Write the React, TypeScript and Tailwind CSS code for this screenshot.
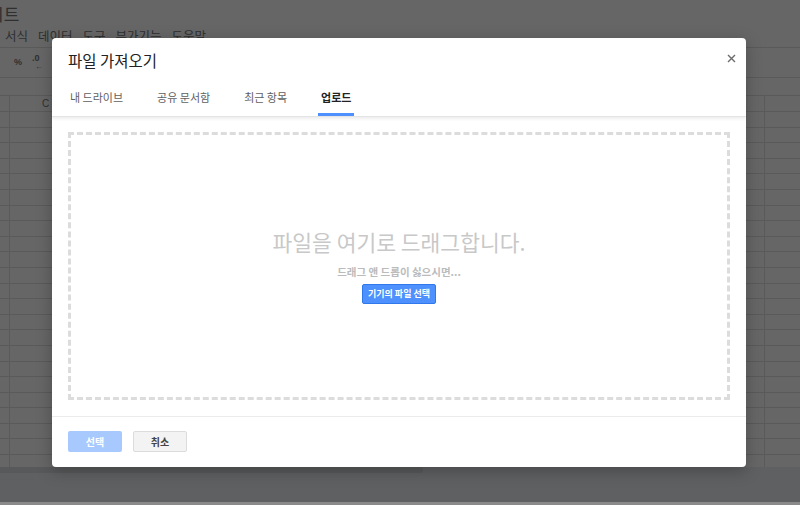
import React from 'react';

const KR = { fontFamily: '"Noto Sans CJK KR", "Liberation Sans", sans-serif' };

const tabs = ['내 드라이브', '공유 문서함', '최근 항목', '업로드'];

const GridRow: React.FC = () => (
    <div className="flex h-[15.6px] shrink-0 border-b border-[#5a5a5a]">
        <div className="w-[10px] border-r border-[#5a5a5a]"></div>
        <div className="flex-1"></div>
        <div className="w-[36px] border-l border-[#5a5a5a]"></div>
    </div>
);

const Sheet: React.FC = () => (
    <div className="flex h-full flex-col bg-[#666666] text-[#2f2f2f]" style={KR}>
        <div className="flex h-[26px] items-center overflow-hidden">
            <span className="-ml-[12px] text-[17px] leading-none">시트</span>
        </div>
        <div className="flex h-[22px] items-start gap-[10px] border-b border-[#5a5a5a] pl-[5px] text-[12.5px] leading-[20px]">
            <span>서식</span>
            <span>데이터</span>
            <span>도구</span>
            <span>부가기능</span>
            <span>도움말</span>
        </div>
        <div className="flex h-[30px] items-center gap-[10px] border-b border-[#5a5a5a] pl-[14px] text-[9px] font-bold" style={{ fontFamily: '"Liberation Sans", sans-serif' }}>
            <span>%</span>
            <span className="flex flex-col items-start gap-[1px] leading-[8px]">
                <span>.0</span>
                <span className="pl-[3px] text-[8px]">←</span>
            </span>
        </div>
        <div className="h-[18px] border-b border-[#5a5a5a]"></div>
        <div className="flex h-[16px] border-b border-[#5a5a5a]">
            <div className="w-[10px] border-r border-[#5a5a5a]"></div>
            <div className="flex-1 pl-[32px] text-[10px] leading-[15px]" style={{ fontFamily: '"Liberation Sans", sans-serif' }}>C</div>
            <div className="w-[36px] border-l border-[#5a5a5a]"></div>
        </div>
        <div className="flex h-[355px] flex-col overflow-hidden">
            {Array.from({ length: 23 }).map((_, i) => (
                <GridRow key={i} />
            ))}
        </div>
        <div className="flex h-[6px] bg-[#5f6062]">
            <div className="w-[423px] rounded-r-[3px] bg-[#58595a]"></div>
        </div>
        <div className="flex-1 bg-[#5f6062]"></div>
        <div className="h-[3px] bg-[#8a8a8a]"></div>
    </div>
);

const App: React.FC = () => {
    return (
        <div className="relative h-[505px] w-[800px] overflow-hidden">
            <Sheet />

            {/* Dialog */}
            <div className="absolute left-[52px] top-[38px] flex h-[429px] w-[694px] flex-col rounded-[4px] bg-white shadow-[0_4px_16px_rgba(0,0,0,0.25)]" style={KR}>
                <button className="absolute right-[10px] top-[16px] flex h-[9px] w-[9px] items-center justify-center">
                    <svg width="9" height="9" viewBox="0 0 9 9">
                        <path d="M1 1 L8 8 M8 1 L1 8" stroke="#6b6b6b" strokeWidth="1.4" />
                    </svg>
                </button>

                <div className="px-4 pt-[12px] pb-[10px] text-[15.5px] leading-[20px] text-[#222]">파일 가져오기</div>

                <div className="flex gap-[28px] border-b border-[#e4e4e4] pl-[15px] shadow-[0_2px_3px_rgba(0,0,0,0.07)]">
                    {tabs.map((t, i) => (
                        <div key={t} className="flex flex-col">
                            <div className={`px-[3px] pt-[10px] pb-[9px] text-[11px] leading-[14px] ${i === 3 ? 'font-bold text-[#222222]' : 'text-[#5f5f5f]'}`}>
                                {t}
                            </div>
                            <div className={`h-[3px] ${i === 3 ? 'bg-[#4d90fe]' : 'bg-transparent'}`}></div>
                        </div>
                    ))}
                </div>

                <div className="mx-4 mt-[15px] mb-[16px] flex h-[268px] flex-col items-center justify-center border-[3px] border-dashed border-[#dcdcdc]">
                    <div className="text-[21.5px] leading-[26px] text-[#c8c8c8]">파일을 여기로 드래그합니다.</div>
                    <div className="mt-[10px] text-[10.5px] font-bold leading-[14px] text-[#bbbbbb]">드래그 앤 드롭이 싫으시면...</div>
                    <button className="mt-[5px] flex h-[20px] w-[74px] items-center justify-center rounded-[2px] border border-[#3079ed] bg-[#4d90fe] text-[9px] font-bold text-white">
                        기기의 파일 선택
                    </button>
                </div>

                <div className="flex flex-1 gap-[11px] border-t border-[#ebebeb] px-4 pt-[14px]">
                    <button className="h-[21px] w-[54px] rounded-[2px] bg-[#a8c9fd] text-[10px] font-bold text-white">선택</button>
                    <button className="h-[21px] w-[54px] rounded-[2px] border border-[#dcdcdc] bg-[#f3f3f3] text-[10px] font-bold text-[#444]">취소</button>
                </div>
            </div>
        </div>
    );
};

export default App;
